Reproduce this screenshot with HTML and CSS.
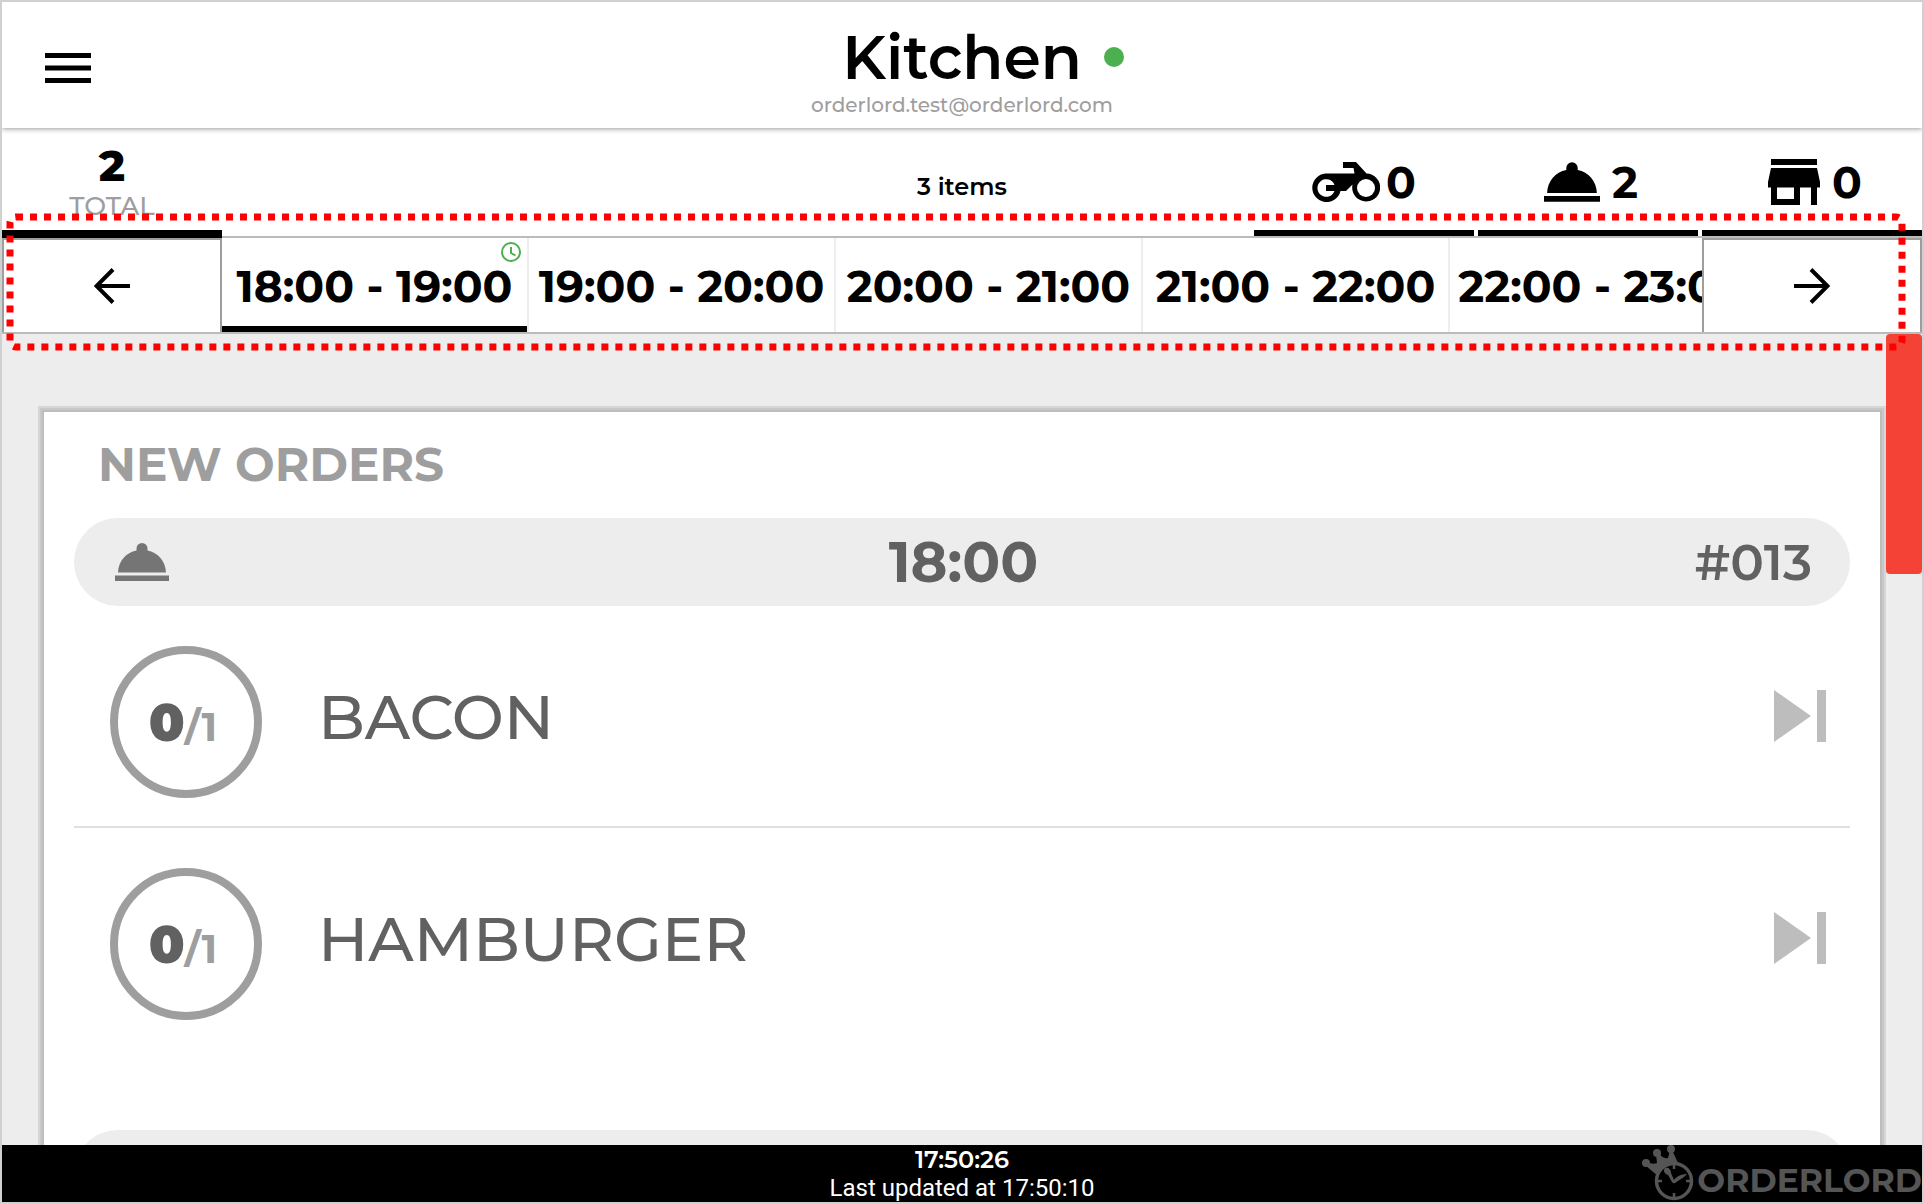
FILE: index.html
```html
<!DOCTYPE html>
<html lang="en">
<head>
<meta charset="utf-8">
<title>Kitchen</title>
<link rel="stylesheet" href="styles.css">
</head>
<body>
<div class="app">
  <svg class="defs" aria-hidden="true">
    <symbol id="dish" viewBox="0 0 54 38"><path d="M0 32.500H54V38H0zM3 29.500C3.500 18 11 9.500 21.500 7.500V5.500a5.500 5.500 0 0 1 11 0v2C43 9.500 50.500 18 51 29.500z"/></symbol>
    <symbol id="skip" viewBox="0 0 52 52"><path d="M0 0l37 26L0 52zM43 0h9v52h-9z"/></symbol>
  </svg>

  <header class="header">
    <button class="menu" aria-label="Menu">
      <svg width="46" height="30" viewBox="0 0 46 30"><path d="M0 0h46v5H0zM0 12.500h46v5H0zM0 25h46v5H0z"/></svg>
    </button>
    <div class="heading">
      <h1 class="title">Kitchen<span class="status"></span></h1>
      <p class="email">orderlord.test@orderlord.com</p>
    </div>
  </header>

  <section class="stats">
    <button class="total"><b>2</b><span>TOTAL</span></button>
    <p class="items">3 items</p>
    <div class="filters">
      <button class="filter" aria-label="Delivery">
        <svg width="68" height="40" viewBox="0 0 68 40"><path d="M31 0h13l10.500 11.500a14 14 0 1 1-14 11L34 29h-5.500a14.300 14.300 0 1 1-15-17.500h29L41.500 6H31z"/><circle cx="54" cy="26" r="9" fill="#fff"/><path fill="#fff" d="M22.500 23a8.800 8.800 0 1 0 0 6H14v-6z"/></svg>0
      </button>
      <button class="filter" aria-label="Dine in"><svg class="wide" width="56" height="40"><use href="#dish"/></svg>2</button>
      <button class="filter" aria-label="Pickup">
        <svg class="wide" width="52" height="46" viewBox="0 0 52 46"><path d="M3 0h46v6H3zM3 9h46l3 14v5.500h-3V46h-6V28.500H32V46H3V28.500H0V23zM9 28.500V40h17V28.500z" fill-rule="evenodd"/></svg>0
      </button>
    </div>
  </section>

  <nav class="times">
    <button class="arrow" aria-label="Earlier">
      <svg width="36" height="36" viewBox="0 0 36 36"><path d="M36 18H3M19 1.500L2.500 18 19 34.500"/></svg>
    </button>
    <div class="slots">
      <button class="slot active">18:00 - 19:00
        <svg class="clock" width="20" height="20" viewBox="0 0 20 20"><circle cx="10" cy="10" r="9"/><path d="M10 5v6l4.500 2.500"/></svg>
      </button>
      <button class="slot">19:00 - 20:00</button>
      <button class="slot">20:00 - 21:00</button>
      <button class="slot">21:00 - 22:00</button>
      <button class="slot">22:00 - 23:00</button>
    </div>
    <button class="arrow" aria-label="Later">
      <svg width="36" height="36" viewBox="0 0 36 36"><path d="M0 18h33M17 1.500L33.500 18 17 34.500"/></svg>
    </button>
  </nav>

  <main class="board">
    <section class="card">
      <h2 class="card-title">New orders</h2>
      <div class="order-head">
        <svg width="54" height="38"><use href="#dish"/></svg>
        <b>18:00</b>
        <span class="number">#013</span>
      </div>
      <ul class="dishes">
        <li class="row">
          <button class="count"><b>0</b>/1</button>
          <span class="name">BACON</span>
          <button class="skip" aria-label="Skip bacon"><svg width="52" height="52"><use href="#skip"/></svg></button>
        </li>
        <li class="row">
          <button class="count"><b>0</b>/1</button>
          <span class="name">HAMBURGER</span>
          <button class="skip" aria-label="Skip hamburger"><svg width="52" height="52"><use href="#skip"/></svg></button>
        </li>
      </ul>
      <div class="order-head"></div>
    </section>
    <div class="scroll"></div>
  </main>

  <footer class="footer">
    <b>17:50:26</b>
    <span class="updated">Last updated at 17:50:10</span>
    <div class="brand">
      <svg width="54" height="56" viewBox="0 0 54 56"><g fill="#555"><circle cx="5" cy="18" r="4"/><circle cx="16" cy="8" r="4"/><circle cx="30" cy="4" r="4"/><path d="M4 20l2-3q6 3 10 1l-1-9 3-1q3 6 9 5l2-8h2l7 15-20 12z"/></g><circle cx="33" cy="36" r="17.500" fill="#000" stroke="#555" stroke-width="3.500"/><path d="M33 19v5M33 48v5M16 36h5M45 36h5" stroke="#555" stroke-width="2.500"/><path fill="#555" d="M31 37l-4-7c-4-1-5-5-3-7 3-1 6 1 6 5l3 7c3-4 8-6 13-6-3 4-7 5-12 9a2.500 2.500 0 0 1-3-1z"/></svg>
      <span>ORDERLORD</span>
    </div>
  </footer>

  <svg class="highlight" aria-hidden="true"><rect x="4" y="4" rx="6"/></svg>
</div>
</body>
</html>
```
FILE: styles.css
```css
* { box-sizing: border-box; margin: 0; padding: 0; }
body { font-family: Montserrat, Inter, sans-serif; color: #000; }
button { font: inherit; color: inherit; background: none; border: 0; cursor: pointer; }
svg { display: block; fill: currentColor; flex: none; }
.defs { position: absolute; width: 0; height: 0; }

.app { position: relative; height: 100vh; display: flex; flex-direction: column; border: 2px solid #d0d0d0; overflow: hidden; background: #fff; }

.header { position: relative; z-index: 1; flex: none; height: 126px; display: grid; grid-template-columns: 220px 1fr 220px; box-shadow: 0 1px 5px rgba(0,0,0,.4); background: #fff; }
.menu { justify-self: start; padding: 6px 43px 0; }
.heading { text-align: center; padding-top: 21px; }
.title { display: flex; align-items: center; justify-content: center; gap: 22px; padding-left: 42px; font-size: 60px; line-height: 70px; font-weight: 600; }
.status { width: 20px; height: 20px; margin-bottom: 2px; border-radius: 50%; background: #4caf50; }
.email { font-size: 20px; line-height: 24px; font-weight: 500; color: #9e9e9e; }

.stats { flex: none; height: 108px; display: grid; grid-template-columns: 1fr auto 1fr; align-items: end; }
.total { width: 220px; height: 110px; z-index: 1; border-bottom: 8px solid #000; margin-bottom: -2px; padding-top: 10px; display: flex; flex-direction: column; align-items: center; justify-content: center; }
.total b { font-size: 44px; line-height: 44px; font-weight: 800; }
.total span { font-size: 26px; line-height: 38px; font-weight: 500; color: #9e9e9e; }
.items { align-self: center; padding-top: 10px; font-size: 24px; line-height: 28px; font-weight: 600; }
.filters { display: flex; justify-content: flex-end; gap: 4px; }
.filter { width: 220px; height: 104px; border-bottom: 6px solid #000; padding-top: 2px; display: flex; align-items: center; justify-content: center; gap: 6px; font-size: 44px; font-weight: 700; }
.wide { margin: 0 6px 0 6px; }

.times { flex: none; height: 98px; display: flex; border-top: 2px solid #bbb; border-bottom: 2px solid #bbb; }
.arrow { flex: none; width: 220px; display: flex; align-items: center; justify-content: center; border: 2px solid #9e9e9e; border-bottom: 0; }
.arrow svg { fill: none; stroke: #000; stroke-width: 4; }
.slots { flex: 1; min-width: 0; display: flex; overflow: hidden; }
.slot { position: relative; flex: none; width: 307px; border-right: 2px solid #eee; padding-top: 2px; font-size: 44px; font-weight: 700; white-space: nowrap; display: flex; align-items: center; justify-content: center; }
.active { box-shadow: inset 0 -6px #000; }
.clock { position: absolute; top: 4px; right: 6px; fill: none; stroke: #4caf50; stroke-width: 2; }

.board { position: relative; flex: 1; min-height: 0; overflow: hidden; padding: 78px 42px 0; background: #ededed; }
.card { min-height: 100%; padding: 24px 30px; background: #fff; box-shadow: 0 0 0 2px #bdbdbd, 0 0 0 4px #c8c8c8, 0 0 0 6px #d6d6d6; }
.card-title { padding-left: 24px; margin-bottom: 24px; font-size: 47px; line-height: 58px; font-weight: 700; color: #9e9e9e; text-transform: uppercase; }
.order-head { height: 88px; padding: 0 38px 0 41px; border-radius: 44px; background: #ededed; color: #616161; display: grid; grid-template-columns: 1fr auto 1fr; align-items: center; font-size: 50px; }
.order-head svg { color: #757575; }
.order-head b { font-size: 56px; font-weight: 700; }
.number { justify-self: end; font-weight: 600; }
.dishes { list-style: none; padding-bottom: 80px; }
.row { height: 222px; padding: 40px 24px 28px 36px; border-bottom: 2px solid #e0e0e0; display: flex; align-items: center; }
.row:last-child { border-color: transparent; }
.count { width: 152px; height: 152px; padding-right: 6px; border: 8px solid #9e9e9e; border-radius: 50%; color: #9e9e9e; font-size: 40px; font-weight: 700; }
.count b { color: #616161; font-size: 52px; }
.name { flex: 1; padding: 0 56px 10px; font-size: 62px; line-height: 80px; font-weight: 500; color: #616161; }
.skip { padding-bottom: 12px; color: #bdbdbd; }
.scroll { position: absolute; top: 0; right: 0; width: 36px; height: 240px; border-radius: 4px; background: #f44336; }

.footer { position: relative; flex: none; height: 57px; padding-top: 1px; background: #000; color: #fff; text-align: center; }
.footer b { display: block; font-size: 24px; line-height: 28px; font-weight: 600; }
.updated { display: block; font: 24px/28px Roboto, sans-serif; }
.brand { position: absolute; right: 0; top: 0; display: flex; align-items: center; gap: 2px; color: #555; font-size: 33px; font-weight: 700; }
.brand span { padding-top: 14px; }

.highlight { position: absolute; z-index: 2; left: 4px; top: 211px; width: calc(100% - 20px); height: 138px; pointer-events: none; }
.highlight rect { width: calc(100% - 8px); height: 130px; fill: none; stroke: #f00; stroke-width: 7; stroke-dasharray: 7 7; }
```
